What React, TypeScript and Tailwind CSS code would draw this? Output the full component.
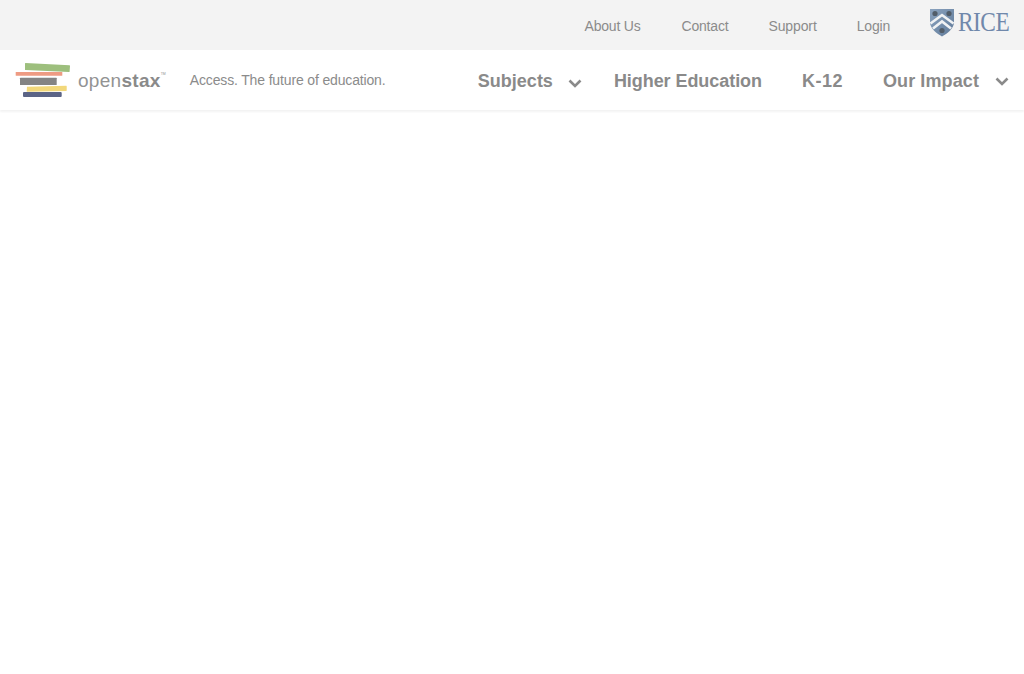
import React from "react";

function Chevron({ className }: { className: string }) {
  return (
    <svg viewBox="0 0 14 9" width="14" height="9" className={className}>
      <path d="M1.5 1.5 L7 7 L12.5 1.5" fill="none" stroke="#8a8a8a" strokeWidth="2.6" />
    </svg>
  );
}

function Books() {
  return (
    <svg width="56" height="36" viewBox="0 0 56 36" className="shrink-0">
      <path d="M10.5 1 L54.5 3.2 Q55 3.2 55 4 L54.6 9.4 Q54.6 10 54 10 L10.5 8 Q10 8 10 7.4 L10 1.5 Q10 1 10.5 1 Z" fill="#9dbf7d" />
      <rect x="0.7" y="10" width="46.6" height="3.7" rx="0.5" fill="#ee9b83" />
      <rect x="5" y="15.7" width="36.7" height="7.3" rx="0.5" fill="#848484" />
      <path d="M12 24.7 L51.2 23.7 Q51.7 23.7 51.7 24.2 L51.7 28.6 Q51.7 29 51.2 29 L12 29.7 Q11.7 29.7 11.7 29.2 Z" fill="#f2d87b" />
      <rect x="8" y="30" width="38.7" height="5" rx="1" fill="#5b6486" />
    </svg>
  );
}

function Shield() {
  return (
    <svg width="26" height="29" viewBox="0 0 26 29" className="shrink-0">
      <defs>
        <linearGradient id="shieldFill" x1="0" y1="0" x2="1" y2="1">
          <stop offset="0" stopColor="#8ba3bf" />
          <stop offset="1" stopColor="#5f7a99" />
        </linearGradient>
      </defs>
      <path d="M1 1 H25 V14 C25 21 18 25.5 13 28.5 C8 25.5 1 21 1 14 Z" fill="url(#shieldFill)" />
      <path d="M1.5 15.5 L13 7 L24.5 15.5 M4 20.5 L13 13.5 L22 20.5" fill="none" stroke="#f0f2f4" strokeWidth="2.6" />
      <circle cx="6" cy="5.5" r="2.6" fill="#525d69" />
      <circle cx="20" cy="5.5" r="2.6" fill="#525d69" />
      <circle cx="13" cy="22.5" r="2.6" fill="#525d69" />
    </svg>
  );
}

export default function App() {
  const sans = "font-['Liberation_Sans',Arial,sans-serif]";
  return (
    <div className={`min-h-[674px] bg-white ${sans}`}>
      <div className="flex h-[50px] items-center justify-end bg-[#f3f3f3] pr-[15px]">
        <div className="flex items-center gap-[41px] pt-[2px] text-[14px] font-light tracking-[-0.2px] text-[#8b8b8b]">
          <span>About Us</span>
          <span>Contact</span>
          <span className="-ml-[1px] tracking-[-0.1px]">Support</span>
          <span className="-ml-[1px]">Login</span>
        </div>
        <div className="mb-[6px] ml-[39px] flex items-center gap-[3px]">
          <Shield />
          <span className="w-[51px] origin-left scale-x-[0.865] whitespace-nowrap font-['Liberation_Serif',serif] text-[27px] leading-none tracking-[-0.6px] text-[#7088ab]">RICE</span>
        </div>
      </div>
      <div className="relative flex h-[60px] items-center justify-between pl-[15px] pr-[15px] shadow-[0_2px_2px_rgba(0,0,0,0.05)]">
        <div className="flex items-center">
          <Books />
          <div className="ml-[7px] flex items-start text-[19px] leading-none tracking-[0.3px] text-[#939393]">
            <span className="font-light">open</span>
            <span className="font-bold text-[#8a8a8a]">stax</span>
            <span className="mt-[2px] text-[3.5px] tracking-normal">TM</span>
          </div>
          <span className="ml-[24px] text-[14px] tracking-[-0.15px] text-[#8b8b8b]">Access. The future of education.</span>
        </div>
        <div className="flex items-center pt-[2px] text-[18px] font-bold text-[#8a8a8a]">
          <span>Subjects</span>
          <Chevron className="ml-[15px] mt-[4px]" />
          <span className="ml-[32px] tracking-[-0.06px]">Higher Education</span>
          <span className="ml-[40px] tracking-[0.5px]">K-12</span>
          <span className="ml-[40px] tracking-[0.1px]">Our Impact</span>
          <Chevron className="ml-[16px]" />
        </div>
      </div>
    </div>
  );
}
